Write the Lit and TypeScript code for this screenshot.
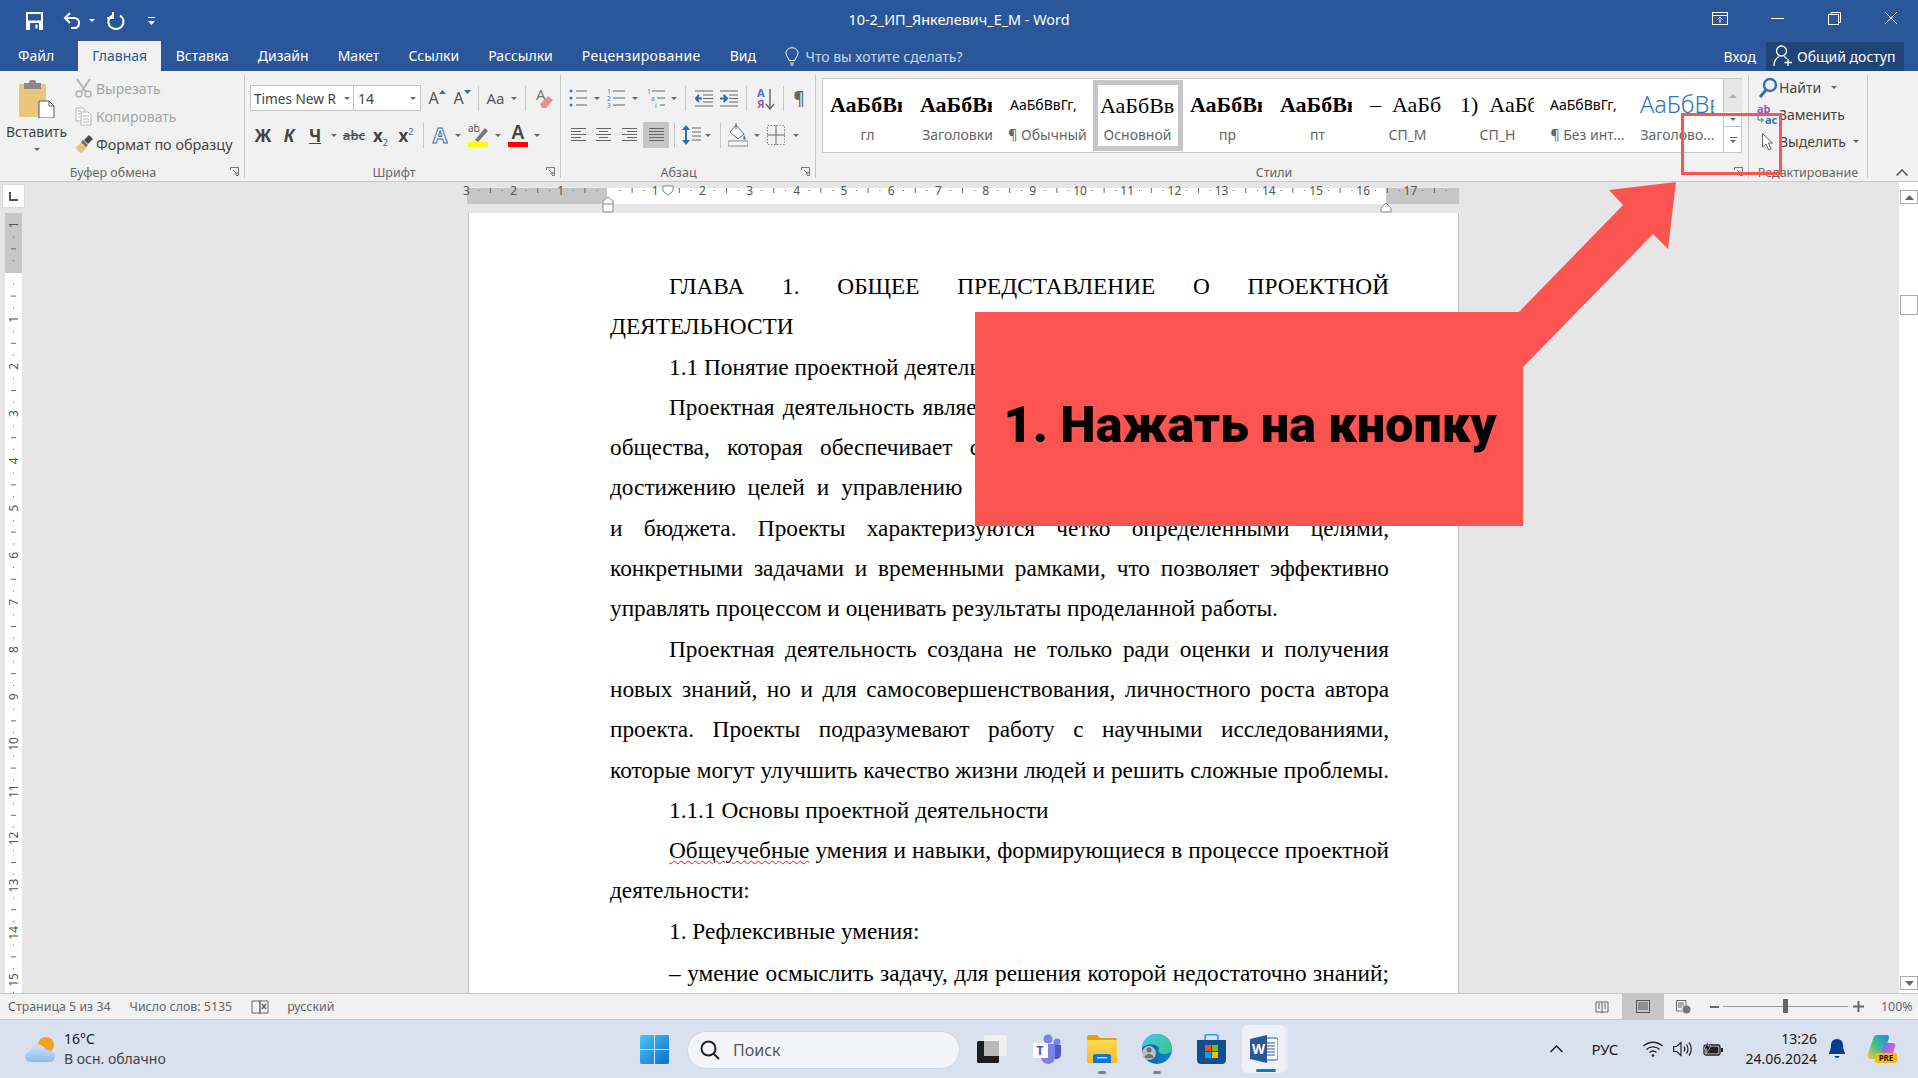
import { LitElement, html, css, svg, nothing } from 'lit';
import { customElement } from 'lit/decorators.js';

// маленькие помощники для значков
const caret = html`<i class="caret"></i>`;
const sep = html`<i class="vsep"></i>`;

const slot = (w: number, content: unknown, cls = '') =>
  html`<span class="slot ${cls}" style="width:${w}px">${content}</span>`;

const lines = (w: number, rows: [number, number][], color = '#666') => html`<svg width=${w} height="14" viewBox="0 0 ${w} 14">
  ${rows.map((r, i) => svg`<rect x=${r[0]} y=${i * 3} width=${r[1] - r[0]} height="1" fill=${color}></rect>`)}
</svg>`;

const launcher = html`<svg class="launch" width="9" height="9" viewBox="0 0 9 9"><path d="M0.5 3V0.5H8.5V8.5H6M3 3L7 7M4.5 7H7V4.5" fill="none" stroke="#777"></path></svg>`;

const pasteIcon = html`<svg width="36" height="38" viewBox="0 0 36 38">
  <rect x="0" y="4" width="27" height="33" rx="1.5" fill="#eac67c"></rect>
  <rect x="5" y="3" width="17" height="6" fill="#8a8a8a"></rect>
  <rect x="10" y="0" width="7" height="5" rx="2" fill="#8a8a8a"></rect>
  <path d="M20 21H30L35 26V38H20Z" fill="#fff" stroke="#555"></path>
  <path d="M30 21V26H35" fill="none" stroke="#555"></path>
</svg>`;

const cutIcon = html`<svg width="17" height="20" viewBox="0 0 17 20" fill="none" stroke="#b4b4b4" stroke-width="1.5">
  <path d="M2 1L11 14M15 1L6 14" stroke-width="2"></path><circle cx="4" cy="16" r="3"></circle><circle cx="13" cy="16" r="3"></circle>
</svg>`;
const copyIcon = html`<svg width="17" height="19" viewBox="0 0 17 19" fill="#fff" stroke="#b4b4b4">
  <path d="M1 1H8L10 3V14H1Z"></path><path d="M6 5H13L16 8V18H6Z"></path><path d="M8 9H14M8 12H14M8 15H14M3 4H6M3 7H5M3 10H5" fill="none"></path>
</svg>`;
const painterIcon = html`<svg width="18" height="19" viewBox="0 0 18 19">
  <path d="M1 12L7 7L12 12L7 18C5 18 1 15 1 12Z" fill="#ecc27a"></path>
  <path d="M6 7L8 5L13 10L11 12Z" fill="#6b6b6b"></path>
  <path d="M9 5L14 0L18 4L13 9Z" fill="#4a4a4a"></path>
</svg>`;

const growA = (up: boolean) => html`<span class="growa">A<svg width="7" height="4" viewBox="0 0 7 4"><path d=${up ? 'M0 4L3.5 0L7 4Z' : 'M0 0H7L3.5 4Z'} fill="#2b6cb0"></path></svg></span>`;

const clearIcon = html`<svg width="18" height="22" viewBox="0 0 18 22"><text x="1" y="13" font-size="15" font-family="Noto Sans" fill="#777">A</text><path d="M5 17L13 9L18 13L11 21H7Z" fill="#ee8d9b"></path></svg>`;

const bullets = html`<svg width="18" height="20" viewBox="0 0 18 20"><g fill="#3f78bd"><circle cx="2" cy="3" r="1.5"></circle><circle cx="2" cy="10" r="1.5"></circle><circle cx="2" cy="17" r="1.5"></circle></g><path d="M7 3H18M7 10H18M7 17H18" stroke="#666"></path></svg>`;
const numbers = html`<svg width="18" height="20" viewBox="0 0 18 20"><g fill="#3f78bd" font-size="6.5" font-family="Noto Sans"><text x="0" y="6">1</text><text x="0" y="13">2</text><text x="0" y="20">3</text></g><path d="M6 3H18M6 10H18M6 17H18" stroke="#666"></path></svg>`;
const multi = html`<svg width="18" height="20" viewBox="0 0 18 20"><g fill="#3f78bd" font-size="6.5" font-family="Noto Sans"><text x="0" y="6">1</text><text x="4" y="13">a</text><text x="8" y="20">i</text></g><path d="M5 3H18M10 10H18M13 17H18" stroke="#666"></path></svg>`;
const indentDec = html`<svg width="18" height="17" viewBox="0 0 18 17"><path d="M0 1H18M8 5H18M8 8.5H18M8 12H18M0 16H18" stroke="#666"></path><path d="M7 8.5H1M4 5L0.8 8.5L4 12" stroke="#2b6cb0" stroke-width="2" fill="none"></path></svg>`;
const indentInc = html`<svg width="18" height="17" viewBox="0 0 18 17"><path d="M0 1H18M9 5H18M9 8.5H18M9 12H18M0 16H18" stroke="#666"></path><path d="M0 8.5H6M3.5 5L7 8.5L3.5 12" stroke="#2b6cb0" stroke-width="2" fill="none"></path></svg>`;
const sortIcon = html`<svg width="18" height="23" viewBox="0 0 18 23"><text x="0" y="10" font-size="11" font-weight="700" font-family="Noto Sans" fill="#3f78bd">А</text><text x="0" y="21" font-size="11" font-weight="700" font-family="Noto Sans" fill="#8e5ca8">Я</text><path d="M13 2V21M9 17L13 22L17 17" fill="none" stroke="#666" stroke-width="1.4"></path></svg>`;
const spacingIcon = html`<svg width="19" height="22" viewBox="0 0 19 22"><path d="M4 4V18" stroke="#2b6cb0" stroke-width="2"></path><path d="M0 6L4 1L8 6ZM0 16L4 21L8 16Z" fill="#2b6cb0"></path><path d="M10 4H19M10 8H19M10 12H19M10 16H19" stroke="#666"></path></svg>`;
const shadeIcon = html`<svg width="20" height="24" viewBox="0 0 20 24"><path d="M8 2L16 11L10 16L2 9Z" fill="#fff" stroke="#666"></path><path d="M8 0V6" stroke="#666"></path><path d="M16 12C18 15 18 16 17 17C15 17 15 14 16 12Z" fill="#3f78bd"></path><rect x="0" y="18" width="20" height="5" fill="#f5f5f5" stroke="#888"></rect></svg>`;
const borderIcon = html`<svg width="18" height="20" viewBox="0 0 18 20" fill="none" stroke="#8a8a8a" stroke-dasharray="1.5 1.5"><rect x="0.5" y="0.5" width="17" height="19"></rect><path d="M0 10H18M9 0V20" stroke-dasharray="none" stroke="#666"></path></svg>`;

const findIcon = html`<svg width="20" height="21" viewBox="0 0 20 21" fill="none" stroke="#2f6fb5"><circle cx="12" cy="8" r="6" stroke-width="2.4"></circle><path d="M8 13L2 20" stroke-width="3"></path></svg>`;
const replaceIcon = html`<svg width="21" height="22" viewBox="0 0 21 22"><text x="0" y="9" font-size="11" font-weight="700" font-family="Noto Sans" fill="#8e5ca8">ab</text><text x="8" y="20" font-size="11" font-weight="700" font-family="Noto Sans" fill="#2f6fb5">ac</text><path d="M1 12V16H6M4 14L6.500 16L4 18" fill="none" stroke="#2f6fb5"></path></svg>`;
const cursorIcon = html`<svg width="11" height="18" viewBox="0 0 11 18"><path d="M0.500 0.500V14L4 11L6.500 17L9 16L6.500 10H10.500Z" fill="#fff" stroke="#666"></path></svg>`;

const RIBBON_TABS = ['Вставка', 'Дизайн', 'Макет', 'Ссылки', 'Рассылки', 'Рецензирование', 'Вид'];

const STYLES = [
  { p: 'АаБбВв', l: 'гл', c: 'bold' },
  { p: 'АаБбВв', l: 'Заголовки', c: 'bold' },
  { p: 'АаБбВвГг,', l: '¶ Обычный', c: 'sans' },
  { p: 'АаБбВв', l: 'Основной', c: 'reg on' },
  { p: 'АаБбВв', l: 'пр', c: 'bold' },
  { p: 'АаБбВв', l: 'пт', c: 'bold' },
  { p: '–  АаБб', l: 'СП_М', c: 'reg' },
  { p: '1)  АаБбВ', l: 'СП_Н', c: 'reg' },
  { p: 'АаБбВвГг,', l: '¶ Без инт...', c: 'sans' },
  { p: 'АаБбВв', l: 'Заголово...', c: 'head' },
];

// строки документа: i - красная строка, j - по ширине, g - чуть ниже предыдущей
const DOC = [
  { t: 'ГЛАВА 1. ОБЩЕЕ ПРЕДСТАВЛЕНИЕ О ПРОЕКТНОЙ', i: 1, j: 1 },
  { t: 'ДЕЯТЕЛЬНОСТИ', i: 0, j: 0 },
  { t: '1.1 Понятие проектной деятельности', i: 1, j: 0 },
  { t: 'Проектная деятельность является важной составляющей современного', i: 1, j: 1 },
  { t: 'общества, которая обеспечивает слаженный подход к планированию и', i: 0, j: 1 },
  { t: 'достижению целей и управлению ресурсами в рамках заданного времени', i: 0, j: 1 },
  { t: 'и бюджета. Проекты характеризуются четко определенными целями,', i: 0, j: 1 },
  { t: 'конкретными задачами и временными рамками, что позволяет эффективно', i: 0, j: 1 },
  { t: 'управлять процессом и оценивать результаты проделанной работы.', i: 0, j: 0 },
  { t: 'Проектная деятельность создана не только ради оценки и получения', i: 1, j: 1 },
  { t: 'новых знаний, но и для самосовершенствования, личностного роста автора', i: 0, j: 1 },
  { t: 'проекта. Проекты подразумевают работу с научными исследованиями,', i: 0, j: 1 },
  { t: 'которые могут улучшить качество жизни людей и решить сложные проблемы.', i: 0, j: 1 },
  { t: '1.1.1 Основы проектной деятельности', i: 1, j: 0 },
  { t: '', i: 1, j: 1 },
  { t: 'деятельности:', i: 0, j: 0 },
  { t: '1. Рефлексивные умения:', i: 1, j: 0 },
  { t: '– умение осмыслить задачу, для решения которой недостаточно знаний;', i: 1, j: 1, g: 1 },
];

const CM = 47.2;
const ZERO_X = 608;
const ZERO_Y = 272;

function hRuler() {
  const items = [];
  for (let c = -3; c <= 18; c++) {
    const x = ZERO_X + c * CM;
    if (c !== 0 && c < 18) items.push(svg`<text x=${x} y="165" class="rt" text-anchor="middle">${Math.abs(c)}</text>`);
    if (c >= 18) continue;
    items.push(svg`<rect x=${x + CM * 0.25} y="160" width="1" height="1" fill="#666"></rect>`);
    items.push(svg`<rect x=${x + CM * 0.5} y="158" width="1" height="5" fill="#666"></rect>`);
    items.push(svg`<rect x=${x + CM * 0.75} y="160" width="1" height="1" fill="#666"></rect>`);
  }
  return html`<svg class="hruler" width="1872" height="31" viewBox="27 151 1872 31">
    <rect x="467" y="157" width="140" height="16" fill="#c6c6c6"></rect>
    <rect x="607" y="157" width="779" height="16" fill="#fff"></rect>
    <rect x="1386" y="157" width="73" height="16" fill="#c6c6c6"></rect>
    <g transform="translate(0,-1)">${items}</g>
    <path d="M663 155H673V160L668 164L663 160Z" fill="#fff" stroke="#888"></path>
    <path d="M603 173V170L608 166L613 170V173H603ZM603 173V181H613V173" fill="#fff" stroke="#888"></path>
    <path d="M1381 181V177L1386 172L1391 177V181Z" fill="#fff" stroke="#888"></path>
  </svg>`;
}

function vRuler() {
  const items = [];
  const base = 213;
  for (let c = -1; c <= 16; c++) {
    const y = ZERO_Y + c * CM - base;
    if (c !== 0 && c <= 15) items.push(svg`<text transform="translate(17.500 ${y}) rotate(-90)" class="rt" text-anchor="middle">${Math.abs(c)}</text>`);
    for (const [f, h] of [[0.25, 1], [0.5, 5], [0.75, 1]]) {
      items.push(svg`<rect x=${h === 1 ? 13 : 11} y=${y + CM * f} width=${h} height="1" fill="#666"></rect>`);
    }
  }
  return html`<svg class="vruler" width="27" height="780" viewBox="0 0 27 780">
    <rect x="5" y="0" width="17" height="60" fill="#c6c6c6"></rect>
    <rect x="5" y="60" width="17" height="720" fill="#fff"></rect>
    ${items}
  </svg>`;
}

@customElement('app-root')
export class AppRoot extends LitElement {
  static styles = css`
    :host {
      display: block;
      width: 1918px;
      height: 1078px;
      position: relative;
      overflow: hidden;
      font-family: 'Noto Sans', sans-serif;
      font-size: 14px;
      color: #444;
    }
    svg { display: block; flex: none; }
    i { display: block; font-style: normal; }

    /* заголовок окна */
    .titlebar {
      background: #2b579a;
      height: 71px;
      color: #fff;
    }
    .title-row {
      height: 41px;
      display: grid;
      grid-template-columns: 1fr auto 1fr;
      align-items: center;
    }
    .qat { display: flex; align-items: center; padding-left: 26px; }
    .title { font-size: 14.4px; padding-bottom: 2px; }
    .winbtns { display: flex; align-items: center; justify-content: flex-end; padding-right: 21px; padding-bottom: 5px; }
    .tab-row { height: 30px; display: flex; align-items: stretch; }
    .tab { padding: 0 14.5px; line-height: 30px; white-space: nowrap; }
    .tab.long { letter-spacing: 0.35px; }
    .tab.file { padding-left: 18px; padding-right: 15px; }
    .tab.on {
      background: #f1f1f1;
      color: #2b579a;
      padding: 0 14px;
      margin-left: 9px;
    }
    .tell { display: flex; align-items: center; gap: 6px; margin-left: 15px; color: #c9d5e8; }
    .tab-right { margin-left: auto; display: flex; align-items: center; }
    .login { margin-right: 10px; }
    .share {
      width: 138px;
      height: 29px;
      margin-right: 14px;
      background: #1e4478;
      display: flex;
      align-items: center;
      gap: 4px;
      padding-left: 7px;
      box-sizing: border-box;
      white-space: nowrap;
    }

    /* лента */
    .ribbon {
      height: 111px;
      box-sizing: border-box;
      background: #f1f1f1;
      border-bottom: 1px solid #c6c6c6;
      padding-top: 4px;
      display: flex;
      position: relative;
    }
    .group {
      height: 103px;
      box-sizing: border-box;
      border-right: 1px solid #c6c6c6;
      position: relative;
      display: flex;
      flex-direction: column;
    }
    .g-clip { width: 245px; }
    .g-font { width: 316px; padding: 10px 0 0 5px; }
    .g-para { width: 255px; padding: 10px 0 0 5px; }
    .g-style { width: 933px; padding: 3px 0 0 6px; }
    .g-edit { width: 119px; }
    .glabel {
      margin-top: auto;
      height: 10px;
      line-height: 10px;
      font-size: 12.5px;
      text-align: center;
      color: #666;
      white-space: nowrap;
    }
    .g-clip .glabel { padding-right: 18px; }
    .g-font .glabel { padding-right: 22px; }
    .g-para .glabel { padding-right: 24px; }
    .g-style .glabel { padding-right: 22px; }
    .launch { position: absolute; right: 5px; bottom: 2px; }
    .row { display: flex; align-items: center; height: 26px; }
    .row + .row { margin-top: 11px; }
    .slot { display: flex; align-items: center; justify-content: center; flex: none; height: 26px; }
    .slot.active { background: #c6c6c6; }
    .vsep { width: 1px; height: 25px; background: #c6c6c6; }
    .caret {
      width: 0;
      height: 0;
      flex: none;
      border-left: 3.5px solid transparent;
      border-right: 3.5px solid transparent;
      border-top: 3.5px solid #666;
    }

    .clip-body { display: flex; flex: 1; }
    .paste { width: 73px; display: flex; flex-direction: column; align-items: center; padding-top: 5px; }
    .paste-label { margin-top: 4px; line-height: 20px; }
    .paste .caret { margin-top: 6px; }
    .clip-list { display: flex; flex-direction: column; margin-top: -1px; }
    .clip-item { display: flex; align-items: center; height: 28px; white-space: nowrap; }
    .clip-icon { width: 23px; display: flex; justify-content: center; margin-left: -1px; margin-right: 1px; }
    .dim { color: #a6a6a6; }
    .painter { font-size: 14.4px; }

    .combo {
      height: 26px;
      box-sizing: border-box;
      border: 1px solid #c6c6c6;
      background: #fff;
      display: flex;
      align-items: center;
      padding: 0 3px;
      white-space: nowrap;
      color: #444;
    }
    .combo .caret { margin-left: auto; }
    .c-name { width: 104px; font-size: 13.6px; }
    .c-size { width: 67px; border-left: 0; padding-left: 4px; padding-right: 4px; }
    .growa { display: flex; align-items: flex-start; font-size: 16px; line-height: 18px; color: #555; }
    .growa svg { margin-top: 1px; }
    .aa { font-size: 15px; color: #555; }
    .fmt { font-size: 17px; font-weight: 700; color: #444; }
    .fmt.it { font-style: italic; }
    .fmt.ul { text-decoration: underline; }
    .strike { font-size: 13px; color: #555; text-decoration: line-through; font-weight: 600; }
    .fmt sub, .fmt sup { font-size: 9px; color: #2b6cb0; font-weight: 400; line-height: 0; }
    .color { display: flex; flex-direction: column; align-items: center; width: 20px; }
    .color b { font-size: 19px; line-height: 19px; color: #444; font-weight: 600; }
    .color i { width: 20px; height: 5px; }
    .fx { font-size: 21px; font-weight: 700; color: #fff; -webkit-text-stroke: 1px #2f6fb5; line-height: 24px; }
    .pil { font-size: 17px; color: #666; font-weight: 600; }

    /* коллекция стилей */
    .gallery {
      width: 920px;
      height: 75px;
      box-sizing: border-box;
      border: 1px solid #c6c6c6;
      background: #fff;
      display: flex;
    }
    .style {
      width: 90px;
      flex: none;
      height: 71px;
      margin-top: 1px;
      box-sizing: border-box;
      display: flex;
      flex-direction: column;
      align-items: center;
      border: 4px solid transparent;
    }
    .style.on { border-color: #c6c6c6; border-width: 5px; }
    .style.on .pv { height: 41px; margin-bottom: 0; }
    .pv {
      width: 74px;
      height: 42px;
      line-height: 41px;
      overflow: hidden;
      white-space: pre;
      color: #000;
      font-family: 'Liberation Serif', serif;
      font-size: 22px;
      flex: none;
      margin-left: -2px;
    }
    .style.bold .pv { font-weight: 700; width: 72px; margin-right: 2px; }
    .style.sans .pv { font-family: 'Noto Sans', sans-serif; font-size: 14px; }
    .style.head .pv { font-family: 'Noto Sans', sans-serif; font-size: 23.5px; color: #2e74b5; font-weight: 300; }
    .style.reg .pv { font-weight: 400; }
    .sl { font-size: 14px; color: #666; line-height: 18px; white-space: nowrap; margin-left: -1px; }
    .gscroll {
      width: 18px;
      margin-left: auto;
      flex: none;
      display: flex;
      flex-direction: column;
      border-left: 1px solid #c6c6c6;
    }
    .gscroll span { display: flex; align-items: center; justify-content: center; }
    .gscroll .g1 { height: 33px; background: #e6e6e6; }
    .gscroll .g2 { height: 14px; border-bottom: 1px solid #c6c6c6; }
    .gscroll .g3 { flex: 1; flex-direction: column; gap: 2px; }
    .gscroll .bar { width: 7px; height: 1px; background: #666; display: block; }

    .edit-list { display: flex; flex-direction: column; margin-top: -1px; padding: 0 0 0 7px; }
    .edit-item { display: flex; align-items: center; height: 27px; white-space: nowrap; }
    .edit-icon { width: 23px; display: flex; justify-content: center; }
    .edit-item .caret { margin-left: 7px; }
    .collapse { position: absolute; right: 10px; bottom: 5px; }

    /* рабочая область */
    .work { height: 811px; display: flex; background: #e6e6e6; }
    .left { width: 27px; flex: none; display: flex; flex-direction: column; }
    .corner-wrap { height: 31px; padding: 2px 0 0 2px; box-sizing: border-box; }
    .corner {
      width: 23px;
      height: 24px;
      box-sizing: border-box;
      background: #fff;
      border: 1px solid #dadada;
      display: flex;
      align-items: center;
      justify-content: center;
    }
    .main { flex: 1; min-width: 0; display: flex; flex-direction: column; }
    .rt { font: 12px 'Noto Sans', sans-serif; fill: #555; dominant-baseline: auto; }
    .page {
      flex: 1;
      min-height: 0;
      width: 991px;
      margin-left: 441px;
      box-sizing: border-box;
      background: #fff;
      border-left: 1px solid #c6c6c6;
      border-right: 1px solid #c6c6c6;
      overflow: hidden;
      padding: 53px 69px 0 141px;
      font-family: 'Liberation Serif', serif;
      font-size: 23.3px;
      line-height: 40.3px;
      color: #000;
    }
    .line { white-space: nowrap; }
    .line.i { padding-left: 59px; }
    .line.g { margin-top: 2px; }
    .line.j { white-space: normal; word-spacing: -2px; text-align: justify; text-align-last: justify; height: 40.3px; overflow: hidden; }
    .err { text-decoration: underline wavy #e81123 1px; text-underline-offset: 2px; }
    .vscroll {
      width: 19px;
      flex: none;
      background: #fff;
      box-sizing: border-box;
      padding: 8px 0 3px 1px;
      display: flex;
      flex-direction: column;
      margin-top: 0;
    }
    .vs-btn { height: 14px; box-sizing: border-box; border: 1px solid #ababab; display: flex; align-items: center; justify-content: center; flex: none; background: #fff; }
    .vs-thumb { height: 20px; margin-top: 91px; box-sizing: border-box; border: 1px solid #ababab; flex: none; }
    .vs-fill { flex: 1; }

    /* строка состояния */
    .status {
      height: 27px;
      box-sizing: border-box;
      background: #f1f1f1;
      border-top: 1px solid #c6c6c6;
      border-bottom: 1px solid #c6c6c6;
      display: flex;
      align-items: center;
      font-size: 12.4px;
      color: #666;
      padding-left: 8px;
      white-space: nowrap;
    }
    .st-words { margin-left: 19px; }
    .st-book { margin: 0 18px 0 19px; }
    .st-right { margin-left: auto; display: flex; align-items: center; height: 100%; }
    .st-view { width: 42px; display: flex; justify-content: center; align-items: center; height: 100%; }
    .st-view.on { background: #c6c6c6; }
    .zoom-track { width: 125px; height: 1px; background: #999; position: relative; margin: 0 5px 0 4px; }
    .zoom-thumb { position: absolute; left: 60px; top: -7px; width: 5px; height: 14px; background: #666; }
    .zoom-pct { width: 37px; margin-left: 17px; }

    /* панель задач */
    .taskbar {
      height: 58px;
      background: #d9e0ee;
      display: flex;
      align-items: center;
      color: #1b1b1b;
      white-space: nowrap;
    }
    .tb-left { width: 640px; flex: none; display: flex; align-items: center; padding-left: 25px; box-sizing: border-box; }
    .tb-weather { margin-left: 9px; line-height: 20px; font-size: 14px; }
    .tb-weather div + div { color: #444; }
    .search {
      width: 273px;
      height: 38px;
      margin-left: 18px;
      margin-top: 2px;
      border-radius: 19px;
      background: #f3f5fa;
      border: 1px solid #d0d6e2;
      box-sizing: border-box;
      display: flex;
      align-items: center;
      gap: 13px;
      padding-left: 12px;
      font-size: 16px;
      color: #555;
    }
    .tb-app { width: 55px; flex: none; height: 58px; display: flex; align-items: center; justify-content: center; position: relative; }
    .tb-app.first { margin-left: 4px; }
    .dot { position: absolute; bottom: 4px; left: 50%; width: 8px; height: 3px; margin-left: -4px; background: #7a8088; border-radius: 2px; }
    .tb-word {
      width: 43px;
      height: 48px;
      margin-left: 3px;
      border-radius: 5px;
      background: rgba(255, 255, 255, 0.55);
      box-shadow: 4px 0 0 -1px rgba(255, 255, 255, 0.3);
      display: flex;
      align-items: center;
      justify-content: center;
      position: relative;
      flex: none;
    }
    .tb-word::after {
      content: '';
      position: absolute;
      bottom: 1px;
      left: 14px;
      width: 20px;
      height: 3px;
      border-radius: 2px;
      background: #0a78d4;
    }
    .tray { margin-left: auto; display: flex; align-items: center; padding-right: 22px; }
    .lang { margin: 0 25px 0 28px; font-size: 15px; }
    .tray-ic { margin-right: 10px; }
    .clock { text-align: right; line-height: 20px; font-size: 14px; margin: 0 12px 0 21px; }
    .copilot { position: relative; margin-left: 22px; }
    .pre {
      position: absolute;
      right: -1px;
      bottom: 0;
      width: 22px;
      height: 10px;
      line-height: 10px;
      border-radius: 2px;
      background: #fdb900;
      color: #111;
      font-size: 8px;
      font-weight: 700;
      text-align: center;
    }

    /* красная выноска поверх всего */
    .arrow { position: absolute; left: 0; top: 0; }
    .callout {
      position: absolute;
      left: 975px;
      top: 312px;
      width: 548px;
      height: 214px;
      background: #fb5451;
      display: flex;
      align-items: center;
      justify-content: center;
      color: #000;
      font-family: Roboto, sans-serif;
      font-weight: 900;
      font-size: 50.2px;
      white-space: nowrap;
      padding: 11px 0 0 2px;
      box-sizing: border-box;
    }
    .mark {
      position: absolute;
      left: 1681px;
      top: 113px;
      width: 101px;
      height: 62px;
      box-sizing: border-box;
      border: 3px solid #fb5451;
    }
  `;

  renderTitle() {
    return html`<div class="title-row">
      <div class="qat">
        <svg width="17" height="18" viewBox="0 0 17 18"><path d="M0 0H17V18H0Z" fill="#fff"></path><rect x="2" y="2" width="13" height="6.500" fill="#2b579a"></rect><rect x="4" y="11" width="9" height="7" fill="#2b579a"></rect><rect x="9.500" y="12.500" width="2" height="4" fill="#fff"></rect></svg>
        <svg style="margin-left:20px" width="18" height="18" viewBox="0 0 18 18" fill="none" stroke="#fff" stroke-width="2"><path d="M2 6H11C14 6 16 8 16 11C16 14 14 16 11 16H8"></path><path d="M7 1L2 6L7 11"></path></svg>
        <i class="caret" style="margin-left:8px;border-top-color:#fff"></i>
        <svg style="margin-left:12px" width="18" height="18" viewBox="0 0 18 18" fill="none" stroke="#fff" stroke-width="2"><path d="M6 3.500C2.500 5 1 8 1.500 11C2 14.500 5 17 9 17C13 17 16.500 14 16.500 9.500C16.500 7 15 5 13 3.500"></path><path d="M6 0V6H0"></path></svg>
        <svg style="margin-left:23px" width="7" height="8" viewBox="0 0 7 8"><path d="M0 0H7V1H0ZM0 4H7L3.500 8Z" fill="#fff"></path></svg>
      </div>
      <div class="title">10-2_ИП_Янкелевич_Е_М - Word</div>
      <div class="winbtns">
        <svg width="16" height="13" viewBox="0 0 16 13" fill="none" stroke="#fff"><rect x="0.500" y="0.500" width="15" height="12"></rect><path d="M0 3.500H16M8 11V5M5.500 7.500L8 5L10.500 7.500"></path></svg>
        <svg style="margin-left:43px" width="13" height="1" viewBox="0 0 13 1"><rect width="13" height="1" fill="#fff"></rect></svg>
        <svg style="margin-left:44px" width="13" height="13" viewBox="0 0 13 13" fill="none" stroke="#fff"><rect x="0.500" y="2.500" width="10" height="10"></rect><path d="M3 2.500V0.500H12.500V10.500H10.500"></path></svg>
        <svg style="margin-left:44px" width="12" height="12" viewBox="0 0 12 12" stroke="#fff"><path d="M0 0L12 12M12 0L0 12"></path></svg>
      </div>
    </div>`;
  }

  renderTabs() {
    return html`<div class="tab-row">
      <div class="tab file">Файл</div>
      <div class="tab on">Главная</div>
      ${RIBBON_TABS.map((t) => html`<div class="tab ${t.length > 10 ? 'long' : ''}">${t}</div>`)}
      <div class="tell">
        <svg width="14" height="19" viewBox="0 0 14 19" fill="none" stroke="#fff"><path d="M4 13.500C4 11 1 9.500 1 6C1 3 3.500 0.800 7 0.800C10.500 0.800 13 3 13 6C13 9.500 10 11 10 13.500Z"></path><path d="M5 16H9M5.500 18H8.500"></path></svg>
        Что вы хотите сделать?
      </div>
      <div class="tab-right">
        <span class="login">Вход</span>
        <div class="share">
          <svg width="20" height="22" viewBox="0 0 20 22" fill="none" stroke="#fff" stroke-width="1.300"><circle cx="8.500" cy="6" r="5"></circle><path d="M1 21C1 16 3 13 6 11.500M11 11.500C12 12 13 12.500 14 14"></path><path d="M15 14V21M11.500 17.500H19"></path></svg>
          Общий доступ
        </div>
      </div>
    </div>`;
  }

  renderClipboard() {
    return html`<div class="group g-clip">
      <div class="clip-body">
        <div class="paste">
          ${pasteIcon}
          <div class="paste-label">Вставить</div>
          ${caret}
        </div>
        <div class="clip-list">
          <div class="clip-item dim"><span class="clip-icon">${cutIcon}</span>Вырезать</div>
          <div class="clip-item dim"><span class="clip-icon">${copyIcon}</span>Копировать</div>
          <div class="clip-item painter"><span class="clip-icon">${painterIcon}</span>Формат по образцу</div>
        </div>
      </div>
      <div class="glabel">Буфер обмена</div>
      ${launcher}
    </div>`;
  }

  renderFont() {
    return html`<div class="group g-font">
      <div class="row">
        <div class="combo c-name">Times New R${caret}</div>
        <div class="combo c-size">14${caret}</div>
        ${slot(3, nothing)}
        ${slot(26, growA(true))}
        ${slot(24, growA(false))}
        ${slot(8, sep)}
        ${slot(27, html`<span class="aa">Aa</span>`)}
        ${slot(9, caret)}
        ${slot(14, sep)}
        ${slot(24, clearIcon)}
      </div>
      <div class="row">
        ${slot(26, html`<span class="fmt">Ж</span>`)}
        ${slot(26, html`<span class="fmt it">К</span>`)}
        ${slot(26, html`<span class="fmt ul">Ч</span>`)}
        ${slot(12, caret)}
        ${slot(28, html`<span class="strike">abc</span>`)}
        ${slot(25, html`<span class="fmt">x<sub>2</sub></span>`)}
        ${slot(26, html`<span class="fmt">x<sup>2</sup></span>`)}
        ${slot(8, sep)}
        ${slot(26, html`<span class="fx">A</span>`)}
        ${slot(10, caret)}
        ${slot(30, html`<span class="color"><svg width="20" height="19" viewBox="0 0 20 19"><text x="0" y="9" font-size="10" font-family="Noto Sans" fill="#555">ab</text><path d="M7 17L17 5L20 8L10 19Z" fill="#777"></path></svg><i style="background:#ffff00"></i></span>`)}
        ${slot(10, caret)}
        ${slot(30, html`<span class="color"><b>A</b><i style="background:#ff0000"></i></span>`)}
        ${slot(8, caret)}
      </div>
      <div class="glabel">Шрифт</div>
      ${launcher}
    </div>`;
  }

  renderParagraph() {
    const full: [number, number][] = [[0, 15], [0, 15], [0, 15], [0, 15], [0, 15]];
    return html`<div class="group g-para">
      <div class="row">
        ${slot(24, bullets)}${slot(14, caret)}
        ${slot(24, numbers)}${slot(14, caret)}
        ${slot(28, multi)}${slot(8, caret)}
        ${slot(14, sep)}
        ${slot(24, indentDec)}${slot(26, indentInc)}
        ${slot(8, sep)}
        ${slot(32, sortIcon)}
        ${slot(2, sep)}
        ${slot(30, html`<span class="pil">¶</span>`)}
      </div>
      <div class="row">
        ${slot(25, lines(15, [[0, 15], [0, 10], [0, 15], [0, 10], [0, 15]]))}
        ${slot(25, lines(15, [[0, 15], [3, 12], [0, 15], [3, 12], [0, 15]]))}
        ${slot(27, lines(15, [[0, 15], [5, 15], [0, 15], [5, 15], [0, 15]]))}
        ${slot(26, lines(15, full), 'active')}
        ${slot(10, sep)}
        ${slot(24, spacingIcon)}${slot(10, caret)}
        ${slot(14, sep)}
        ${slot(22, shadeIcon)}${slot(16, caret)}
        ${slot(22, borderIcon)}${slot(18, caret)}
      </div>
      <div class="glabel">Абзац</div>
      ${launcher}
    </div>`;
  }

  renderStyles() {
    return html`<div class="group g-style">
      <div class="gallery">
        ${STYLES.map((s) => html`<div class="style ${s.c}"><div class="pv">${s.p}</div><div class="sl">${s.l}</div></div>`)}
        <div class="gscroll">
          <span class="g1"><svg width="8" height="4" viewBox="0 0 8 4"><path d="M0 4L4 0L8 4Z" fill="#b0b0b0"></path></svg></span>
          <span class="g2"><i class="caret"></i></span>
          <span class="g3"><i class="bar"></i><i class="caret"></i></span>
        </div>
      </div>
      <div class="glabel">Стили</div>
      ${launcher}
    </div>`;
  }

  renderEditing() {
    return html`<div class="group g-edit">
      <div class="edit-list">
        <div class="edit-item"><span class="edit-icon">${findIcon}</span>Найти<i class="caret" style="margin-left:10px"></i></div>
        <div class="edit-item"><span class="edit-icon">${replaceIcon}</span>Заменить</div>
        <div class="edit-item"><span class="edit-icon">${cursorIcon}</span>Выделить<i class="caret"></i></div>
      </div>
      <div class="glabel">Редактирование</div>
    </div>`;
  }

  renderDoc() {
    return html`<div class="page">
      ${DOC.map((l) => html`<div class="line ${l.i ? 'i' : ''} ${l.j ? 'j' : ''} ${l.g ? 'g' : ''}">${
        l.t === '' ? html`<span class="err">Общеучебные</span> умения и навыки, формирующиеся в процессе проектной` : l.t
      }</div>`)}
    </div>`;
  }

  renderStatus() {
    return html`<div class="status">
      <span>Страница 5 из 34</span>
      <span class="st-words">Число слов: 5135</span>
      <svg class="st-book" width="18" height="16" viewBox="0 0 18 16" fill="none" stroke="#666"><path d="M9 2H1V14H8L9 15V2ZM9 1V15M9 2H17V14H10"></path><path d="M11 5L15 10M15 5L11 10" stroke-width="1.500"></path></svg>
      <span>русский</span>
      <div class="st-right">
        <svg width="14" height="14" viewBox="0 0 14 14" fill="none" stroke="#666"><path d="M7 2H1V12H7V13V2H13V12H7M3 4H5M3 6H5M3 8H5M9 4H11M9 6H11M9 8H11"></path></svg>
        <div class="st-view on" style="margin-left:13px"><svg width="14" height="13" viewBox="0 0 14 13" fill="none" stroke="#555"><rect x="0.500" y="0.500" width="13" height="12"></rect><path d="M2 3H12M2 5H12M2 7H12M2 9H12"></path></svg></div>
        <svg style="margin-left:12px" width="15" height="14" viewBox="0 0 15 14"><path d="M0.500 0.500H10V6M0.500 0.500V11H6M2 3H8M2 5H8M2 7H6" fill="none" stroke="#666"></path><circle cx="10.500" cy="9.500" r="4" fill="#777"></circle></svg>
        <svg style="margin-left:19px" width="9" height="2" viewBox="0 0 9 2"><rect width="9" height="2" fill="#666"></rect></svg>
        <div class="zoom-track"><i class="zoom-thumb"></i></div>
        <svg width="11" height="11" viewBox="0 0 11 11"><path d="M0 4.500H4.500V0H6.500V4.500H11V6.500H6.500V11H4.500V6.500H0Z" fill="#666"></path></svg>
        <span class="zoom-pct">100%</span>
      </div>
    </div>`;
  }

  renderTaskbar() {
    return html`<div class="taskbar">
      <div class="tb-left">
        <svg width="30" height="26" viewBox="0 0 30 26">
          <defs><linearGradient id="cl" x1="0" y1="0" x2="0" y2="1"><stop offset="0" stop-color="#cfe3f8"></stop><stop offset="1" stop-color="#8bbcec"></stop></linearGradient></defs>
          <circle cx="21" cy="9" r="8" fill="#f4a01f"></circle>
          <path d="M6 26C2 26 0 23 0 21C0 18 2 16 5 15.500C6 11 9 8.500 13 8.500C17 8.500 20 11 21 14C26 14 30 15.500 30 20C30 24 27 26 24 26Z" fill="url(#cl)"></path>
        </svg>
        <div class="tb-weather"><div>16°C</div><div>В осн. облачно</div></div>
      </div>
      <svg width="29" height="29" viewBox="0 0 29 29">
        <defs><linearGradient id="wn" x1="0" y1="0" x2="1" y2="1"><stop offset="0" stop-color="#4fc3f7"></stop><stop offset="1" stop-color="#0670cc"></stop></linearGradient></defs>
        <path d="M0 1.500A1.500 1.500 0 0 1 1.500 0H14V14H0ZM15 0H27.500A1.500 1.500 0 0 1 29 1.500V14H15ZM0 15H14V29H1.500A1.500 1.500 0 0 1 0 27.500ZM15 15H29V27.500A1.500 1.500 0 0 1 27.500 29H15Z" fill="url(#wn)"></path>
      </svg>
      <div class="search">
        <svg width="20" height="20" viewBox="0 0 20 20" fill="none" stroke="#222" stroke-width="2"><circle cx="8.500" cy="8.500" r="7"></circle><path d="M13.500 13.500L19 19"></path></svg>
        Поиск
      </div>
      <div class="tb-app first">
        <svg width="30" height="28" viewBox="0 0 30 28"><rect x="0" y="6" width="22" height="22" rx="1.500" fill="#1f1f1f"></rect><rect x="7" y="0" width="23" height="21" rx="1.500" fill="#f2f2f2" opacity="0.85"></rect><rect x="7" y="6" width="15" height="15" fill="#b9b9b9"></rect></svg>
      </div>
      <div class="tb-app">
        <svg width="28" height="30" viewBox="0 0 28 30">
          <circle cx="24" cy="8" r="3.500" fill="#7b83eb"></circle><circle cx="15" cy="5" r="4.500" fill="#7b83eb"></circle>
          <path d="M18 11H28V20C28 23 26 25 23 25C20 25 18 23 18 20Z" fill="#5059c9"></path>
          <path d="M8 10H22V23C22 27 19 30 15 30C11 30 8 27 8 23Z" fill="#7b83eb"></path>
          <rect x="0" y="9" width="15" height="15" fill="#fff"></rect>
          <text x="3.500" y="21" font-size="12" font-weight="700" font-family="Noto Sans" fill="#4b53bc">T</text>
        </svg>
      </div>
      <div class="tb-app">
        <svg width="30" height="28" viewBox="0 0 30 28">
          <defs><linearGradient id="fd" x1="0" y1="0" x2="0" y2="1"><stop offset="0" stop-color="#ffd94f"></stop><stop offset="1" stop-color="#fbb92c"></stop></linearGradient></defs>
          <path d="M0 2C0 1 1 0 2 0H10L13 3H28C29 3 30 4 30 5V10H0Z" fill="#e3a008"></path>
          <rect x="0" y="5" width="30" height="23" rx="1" fill="url(#fd)"></rect>
          <path d="M6 28V21C6 20 7 19 8 19H22C23 19 24 20 24 21V28Z" fill="#0a78d4"></path>
          <rect x="10" y="22" width="10" height="1.500" fill="#bfe0fa"></rect>
        </svg>
        <i class="dot"></i>
      </div>
      <div class="tb-app">
        <svg width="30" height="30" viewBox="0 0 30 30">
          <defs>
            <linearGradient id="eg" x1="0" y1="0" x2="1" y2="1"><stop offset="0" stop-color="#46c8ec"></stop><stop offset="1" stop-color="#3ac47d"></stop></linearGradient>
            <linearGradient id="eb" x1="0" y1="0" x2="1" y2="0"><stop offset="0" stop-color="#0c59a4"></stop><stop offset="1" stop-color="#1684d8"></stop></linearGradient>
          </defs>
          <circle cx="15" cy="15" r="15" fill="url(#eb)"></circle>
          <path d="M0 14C1 6 7 0 15 0C24 0 30 7 30 14C30 18 26 20 22 20C18 20 15 18 17 14C13 9 6 9 0 14Z" fill="url(#eg)"></path>
          <circle cx="7" cy="19" r="7" fill="#bdbdbd"></circle><circle cx="7" cy="16" r="2.500" fill="#6f6f6f"></circle><path d="M2.500 24C3 21 5 20 7 20C9 20 11 21 11.500 24Z" fill="#6f6f6f"></path>
        </svg>
        <i class="dot"></i>
      </div>
      <div class="tb-app">
        <svg width="29" height="30" viewBox="0 0 29 30">
          <path d="M8 6V3C8 1.500 9 0.800 10 0.800H19C20 0.800 21 1.500 21 3V6" fill="none" stroke="#2aa0e6" stroke-width="1.600"></path>
          <path d="M0 6H29V26C29 28 27.500 30 25 30H4C1.500 30 0 28 0 26Z" fill="#0f4f8c"></path>
          <rect x="8" y="11" width="6" height="6" fill="#f25022"></rect><rect x="15" y="11" width="6" height="6" fill="#7fba00"></rect>
          <rect x="8" y="18" width="6" height="6" fill="#00a4ef"></rect><rect x="15" y="18" width="6" height="6" fill="#ffb900"></rect>
        </svg>
      </div>
      <div class="tb-word">
        <svg width="28" height="28" viewBox="0 0 28 28">
          <path d="M10 3H26C27 3 28 3.500 28 5V23C28 24.500 27 25 26 25H10Z" fill="#fff" stroke="#2b579a"></path>
          <path d="M16 8H25M16 11H25M16 14H25M16 17H25M16 20H25" stroke="#2b579a" stroke-width="1.200"></path>
          <path d="M0 4L17 0V28L0 24Z" fill="#2b579a"></path>
          <text x="2" y="19" font-size="13.500" font-weight="700" font-family="Noto Sans" fill="#fff">W</text>
        </svg>
      </div>
      <div class="tray">
        <svg width="13" height="8" viewBox="0 0 13 8" fill="none" stroke="#222" stroke-width="1.500"><path d="M0.500 7L6.500 1L12.500 7"></path></svg>
        <span class="lang">РУС</span>
        <svg class="tray-ic" width="20" height="16" viewBox="0 0 20 16" fill="none" stroke="#222" stroke-width="1.300"><path d="M0.500 5C6 0 14 0 19.500 5M3.500 8.500C7 5 13 5 16.500 8.500M6.500 11.500C8.500 9.800 11.500 9.800 13.500 11.500"></path><circle cx="10" cy="14.500" r="1.300" fill="#222" stroke="none"></circle></svg>
        <svg class="tray-ic" width="20" height="16" viewBox="0 0 20 16" fill="none" stroke="#222" stroke-width="1.200"><path d="M0.600 5.500H3.500L8 1.500V14.500L3.500 10.500H0.600Z"></path><path d="M11 5.500C12 7 12 9 11 10.500M13.500 3.500C15.500 6 15.500 10 13.500 12.500M16 1.500C19 5 19 11 16 14.500"></path></svg>
        <svg width="21" height="17" viewBox="0 0 21 17"><rect x="1" y="4" width="16" height="10" rx="2" fill="none" stroke="#222" stroke-width="1.300"></rect><rect x="2.500" y="5.500" width="13" height="7" fill="#222"></rect><rect x="18" y="7" width="2" height="4" fill="#222"></rect><path d="M5 0L1 8H4L3 13L8 5H5Z" fill="#222" stroke="#d9e0ee" stroke-width="0.600"></path></svg>
        <div class="clock"><div>13:26</div><div>24.06.2024</div></div>
        <svg width="16" height="20" viewBox="0 0 16 20"><path d="M8 0C4 0 2 3 2 6C2 10 1 12 0 14V15H16V14C15 12 14 10 14 6C14 3 12 0 8 0Z" fill="#003e92"></path><path d="M5.500 17H10.500C10 19.500 6 19.500 5.500 17Z" fill="#003e92"></path></svg>
        <div class="copilot">
          <svg width="29" height="28" viewBox="0 0 29 28">
            <defs>
              <linearGradient id="c1" x1="0" y1="1" x2="1" y2="0"><stop offset="0" stop-color="#f5c63c"></stop><stop offset="0.500" stop-color="#35c08a"></stop><stop offset="1" stop-color="#2b86e0"></stop></linearGradient>
              <linearGradient id="c2" x1="0" y1="0" x2="1" y2="1"><stop offset="0" stop-color="#4a6fe6"></stop><stop offset="0.600" stop-color="#c868d8"></stop><stop offset="1" stop-color="#f0709a"></stop></linearGradient>
            </defs>
            <path d="M10 0H20C21 0 22 1 22 3L16 20C15 23 13 24 11 24H5C2 24 0 22 1 19L6 4C7 1 8 0 10 0Z" fill="url(#c1)"></path>
            <path d="M14 8H25C28 8 29 10 28 12L25 22C24 25 22 26 20 26H11L17 10C17.500 9 18 8 14 8Z" fill="url(#c2)"></path>
          </svg>
          <div class="pre">PRE</div>
        </div>
      </div>
    </div>`;
  }

  render() {
    return html`
      <div class="titlebar">${this.renderTitle()}${this.renderTabs()}</div>
      <div class="ribbon">
        ${this.renderClipboard()}
        ${this.renderFont()}
        ${this.renderParagraph()}
        ${this.renderStyles()}
        ${this.renderEditing()}
        <svg class="collapse" width="12" height="7" viewBox="0 0 12 7" fill="none" stroke="#555" stroke-width="1.500"><path d="M0.500 6.500L6 1L11.500 6.500"></path></svg>
      </div>
      <div class="work">
        <div class="left">
          <div class="corner-wrap"><div class="corner"><svg width="9" height="9" viewBox="0 0 9 9"><path d="M1 0V8H9" fill="none" stroke="#555" stroke-width="2"></path></svg></div></div>
          ${vRuler()}
        </div>
        <div class="main">
          ${hRuler()}
          ${this.renderDoc()}
        </div>
        <div class="vscroll">
          <div class="vs-btn"><svg width="9" height="5" viewBox="0 0 9 5"><path d="M0 5L4.500 0L9 5Z" fill="#666"></path></svg></div>
          <div class="vs-thumb"></div>
          <div class="vs-fill"></div>
          <div class="vs-btn"><svg width="9" height="5" viewBox="0 0 9 5"><path d="M0 0H9L4.500 5Z" fill="#666"></path></svg></div>
        </div>
      </div>
      ${this.renderStatus()}
      ${this.renderTaskbar()}
      <svg class="arrow" width="1918" height="1078" viewBox="0 0 1918 1078"><polygon points="1676,182 1609,190 1623,205 1519,312 1523,367 1653,234 1668,249" fill="#fb5451"></polygon></svg>
      <div class="callout">1. Нажать на кнопку</div>
      <div class="mark"></div>
    `;
  }
}
